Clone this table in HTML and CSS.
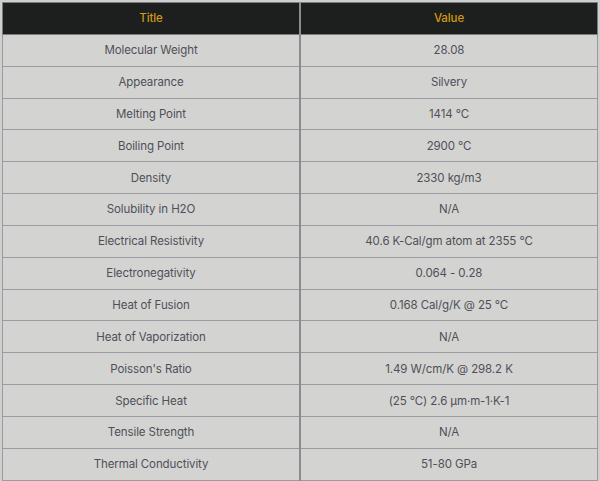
FILE: index.html
```html
<!DOCTYPE html>
<html>
<head>
<meta charset="utf-8">
<link rel="stylesheet" href="styles.css">
</head>
<body>
<table class="props">
  <thead>
    <tr><th>Title</th><th>Value</th></tr>
  </thead>
  <tbody>
    <tr><td>Molecular Weight</td><td>28.08</td></tr>
    <tr><td>Appearance</td><td>Silvery</td></tr>
    <tr><td>Melting Point</td><td>1414 °C</td></tr>
    <tr><td>Boiling Point</td><td>2900 °C</td></tr>
    <tr><td>Density</td><td>2330 kg/m3</td></tr>
    <tr><td>Solubility in H2O</td><td>N/A</td></tr>
    <tr><td>Electrical Resistivity</td><td>40.6 K-Cal/gm atom at 2355 °C</td></tr>
    <tr><td>Electronegativity</td><td>0.064 - 0.28</td></tr>
    <tr><td>Heat of Fusion</td><td>0.168 Cal/g/K @ 25 °C</td></tr>
    <tr><td>Heat of Vaporization</td><td>N/A</td></tr>
    <tr><td>Poisson's Ratio</td><td>1.49 W/cm/K @ 298.2 K</td></tr>
    <tr><td>Specific Heat</td><td>(25 °C) 2.6 µm·m-1·K-1</td></tr>
    <tr><td>Tensile Strength</td><td>N/A</td></tr>
    <tr><td>Thermal Conductivity</td><td>51-80 GPa</td></tr>
  </tbody>
</table>
</body>
</html>
```

FILE: styles.css
```css
html, body {
  margin: 0;
  padding: 0;
  background: #cfcfcf;
}
body {
  padding: 2px;
  font-family: Inter, "Noto Sans", sans-serif;
}
.props {
  width: 596px;
  border-collapse: collapse;
  border: 1px solid #7c7c80;
  background: #d3d4d1;
  table-layout: fixed;
}
.props th, .props td {
  border: 1px solid #9a9aa0;
  text-align: center;
  padding: 0;
  height: 30.85px;
  font-size: 11.5px;
  letter-spacing: -0.1px;
}
.props th {
  background: #1d1e1e;
  color: #d39a12;
  font-weight: 500;
  border-color: #7c7c80;
}
.props td {
  color: #4f4f58;
  font-weight: 400;
}
.props td:first-child, .props th:first-child {
  border-right: 2px solid #8c8c90;
}
```
